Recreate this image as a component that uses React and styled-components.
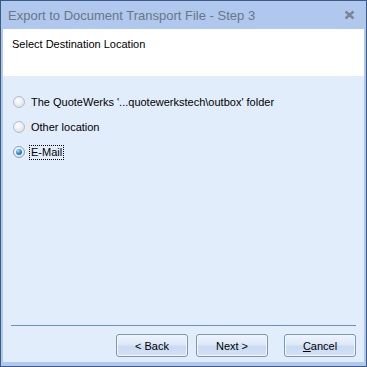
import React from 'react';
import styled, { createGlobalStyle } from 'styled-components';

const GlobalStyle = createGlobalStyle`
	html, body {
		margin: 0;
		padding: 0;
		background: #ffffff;
	}
	* {
		box-sizing: border-box;
	}
`;

const Window = styled.div`
	width: 367px;
	height: 367px;
	border: 1px solid #3b5a84;
	background-color: #b0c8ee;
	padding: 0 2px 4px 2px;
	display: flex;
	flex-direction: column;
	font-family: 'Liberation Sans', Arial, sans-serif;
`;

const TitleBar = styled.div`
	height: 28px;
	display: flex;
	align-items: center;
	justify-content: space-between;
	padding: 0 9px 0 5px;
	color: #6a7687;
	font-size: 13px;
`;

const CloseBtn = styled.svg`
	width: 11px;
	height: 10px;
`;

const Header = styled.div`
	height: 47px;
	background-color: #ffffff;
	padding: 9px 0 0 9px;
	font-size: 11px;
	color: #000000;
`;

const Body = styled.div`
	flex: 1;
	background-color: #e2edfc;
	display: flex;
	flex-direction: column;
	padding: 18px 8px 5px 8px;
`;

const Options = styled.div`
	flex: 1;
	display: flex;
	flex-direction: column;
	gap: 9px;
	padding-left: 1px;
`;

const Option = styled.label`
	display: flex;
	align-items: center;
	height: 16px;
	font-size: 11px;
	line-height: 13px;
	color: #000000;
	gap: 4px;
`;

const Radio = styled.span`
	flex: none;
	width: 12px;
	height: 12px;
	border-radius: 50%;
	border: 1px solid ${p => (p.$checked ? '#8aa0b8' : '#b4bcc6')};
	background: radial-gradient(circle at 40% 35%, #ffffff 0%, #e8ebef 55%, #cfd4da 100%);
	margin-left: 1px;
	display: flex;
	align-items: center;
	justify-content: center;

	&::after {
		content: '';
		display: ${p => (p.$checked ? 'block' : 'none')};
		width: 6px;
		height: 6px;
		border-radius: 50%;
		background: radial-gradient(circle at 35% 30%, #a8e0ff 0%, #2b8ad0 50%, #135a9a 100%);
	}
`;

const OptionText = styled.span`
	padding: 0 1px;
	border: 1px dotted ${p => (p.$focused ? '#000000' : 'transparent')};
	line-height: 13px;
`;

const Separator = styled.div`
	height: 1px;
	background-color: #6f8fbe;
	margin: 0 0 8px 0;
`;

const Buttons = styled.div`
	display: flex;
	justify-content: flex-end;
	gap: 8px;
`;

const Button = styled.button`
	width: 72px;
	height: 23px;
	border: 1px solid #7995bd;
	border-radius: 3px;
	background: linear-gradient(to bottom, #eef4fd 0%, #dde8f8 45%, #c9daf2 55%, #d4e2f6 100%);
	font-family: 'Liberation Sans', Arial, sans-serif;
	font-size: 11px;
	color: #000000;
	padding: 0;
	margin-left: ${p => (p.$spaced ? '8px' : '0')};
	box-shadow: inset 0 0 0 1px #f5f9ff;
`;

const Underline = styled.span`
	text-decoration: underline;
`;

const App = () => {
	return (
		<>
			<GlobalStyle />
			<Window>
				<TitleBar>
					<span>Export to Document Transport File - Step 3</span>
					<CloseBtn viewBox="0 0 11 10">
						<path d="M1.5 1.5 L9.5 8.5 M9.5 1.5 L1.5 8.5" stroke="#7b8493" strokeWidth="2.4" />
					</CloseBtn>
				</TitleBar>
				<Header>Select Destination Location</Header>
				<Body>
					<Options>
						<Option>
							<Radio />
							<OptionText>The QuoteWerks '...quotewerkstech\outbox' folder</OptionText>
						</Option>
						<Option>
							<Radio />
							<OptionText>Other location</OptionText>
						</Option>
						<Option>
							<Radio $checked />
							<OptionText $focused>E-Mail</OptionText>
						</Option>
					</Options>
					<Separator />
					<Buttons>
						<Button>&lt; Back</Button>
						<Button>Next &gt;</Button>
						<Button $spaced><Underline>C</Underline>ancel</Button>
					</Buttons>
				</Body>
			</Window>
		</>
	);
};

export default App;
